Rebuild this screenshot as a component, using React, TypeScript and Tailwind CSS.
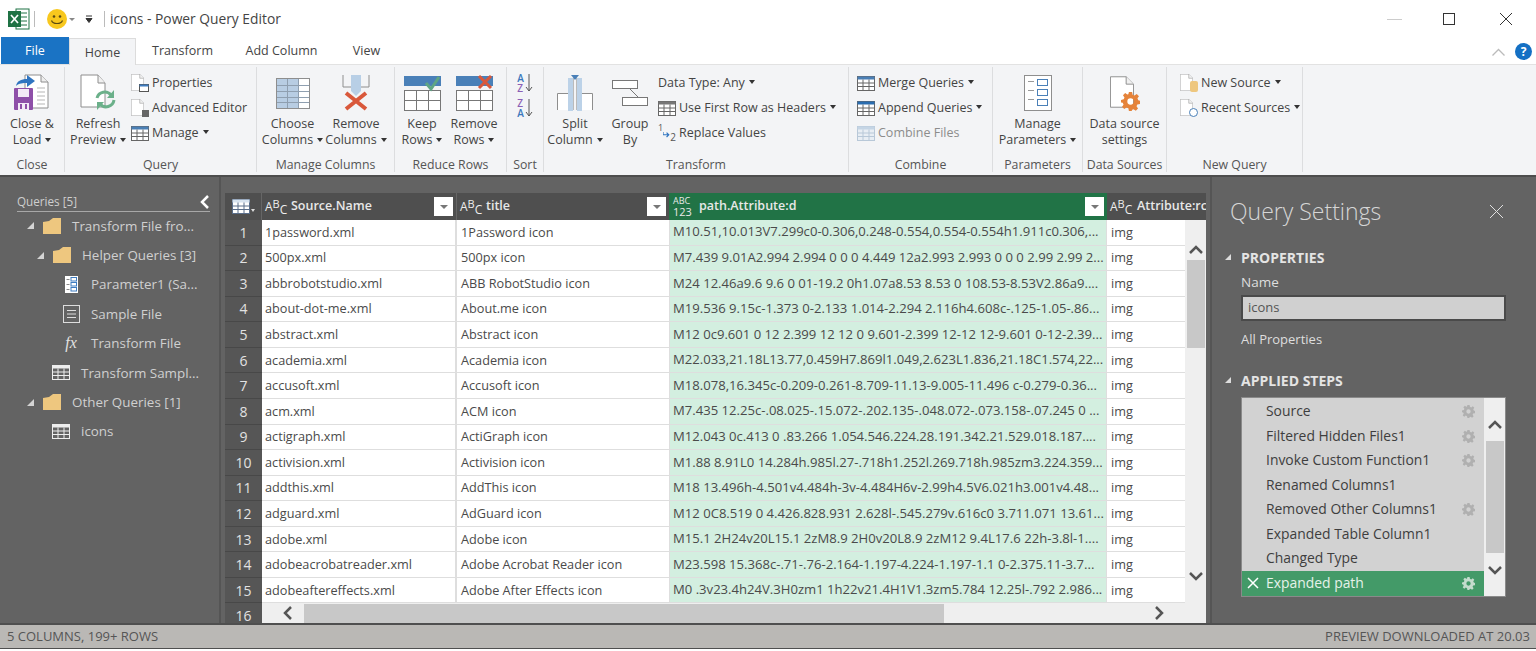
import type { ReactNode } from "react";

const rows = [
  ["1password.xml", "1Password icon", "M10.51,10.013V7.299c0-0.306,0.248-0.554,0.554-0.554h1.911c0.306,..."],
  ["500px.xml", "500px icon", "M7.439 9.01A2.994 2.994 0 0 0 4.449 12a2.993 2.993 0 0 0 2.99 2.99 2..."],
  ["abbrobotstudio.xml", "ABB RobotStudio icon", "M24 12.46a9.6 9.6 0 01-19.2 0h1.07a8.53 8.53 0 108.53-8.53V2.86a9...."],
  ["about-dot-me.xml", "About.me icon", "M19.536 9.15c-1.373 0-2.133 1.014-2.294 2.116h4.608c-.125-1.05-.86..."],
  ["abstract.xml", "Abstract icon", "M12 0c9.601 0 12 2.399 12 12 0 9.601-2.399 12-12 12-9.601 0-12-2.39..."],
  ["academia.xml", "Academia icon", "M22.033,21.18L13.77,0.459H7.869l1.049,2.623L1.836,21.18C1.574,22..."],
  ["accusoft.xml", "Accusoft icon", "M18.078,16.345c-0.209-0.261-8.709-11.13-9.005-11.496 c-0.279-0.36..."],
  ["acm.xml", "ACM icon", "M7.435 12.25c-.08.025-.15.072-.202.135-.048.072-.073.158-.07.245 0 ..."],
  ["actigraph.xml", "ActiGraph icon", "M12.043 0c.413 0 .83.266 1.054.546.224.28.191.342.21.529.018.187...."],
  ["activision.xml", "Activision icon", "M1.88 8.91L0 14.284h.985l.27-.718h1.252l.269.718h.985zm3.224.359..."],
  ["addthis.xml", "AddThis icon", "M18 13.496h-4.501v4.484h-3v-4.484H6v-2.99h4.5V6.021h3.001v4.48..."],
  ["adguard.xml", "AdGuard icon", "M12 0C8.519 0 4.426.828.931 2.628l-.545.279v.616c0 3.711.071 13.61..."],
  ["adobe.xml", "Adobe icon", "M15.1 2H24v20L15.1 2zM8.9 2H0v20L8.9 2zM12 9.4L17.6 22h-3.8l-1...."],
  ["adobeacrobatreader.xml", "Adobe Acrobat Reader icon", "M23.598 15.368c-.71-.76-2.164-1.197-4.224-1.197-1.1 0-2.375.11-3.7..."],
  ["adobeaftereffects.xml", "Adobe After Effects icon", "M0 .3v23.4h24V.3H0zm1 1h22v21.4H1V1.3zm5.784 12.25l-.792 2.986..."],
];

const steps = [
  ["Source", true],
  ["Filtered Hidden Files1", true],
  ["Invoke Custom Function1", true],
  ["Renamed Columns1", false],
  ["Removed Other Columns1", true],
  ["Expanded Table Column1", false],
  ["Changed Type", false],
] as const;

function Caret() {
  return <span className="inline-block ml-1 align-middle border-x-[3.5px] border-t-[4px] border-x-transparent border-t-[#333] -translate-y-px" />;
}

function Doc({ w = 26, h = 34 }: { w?: number; h?: number }) {
  return (
    <svg width={w} height={h} viewBox="0 0 26 34">
      <path d="M.5.5h17l8 8v25H.5z" fill="#fff" stroke="#8a8a8a" />
      <path d="M17.5.5v8h8" fill="#f0f0f0" stroke="#8a8a8a" />
    </svg>
  );
}

function Gear({ size = 12, color = "#a9a9a9" }: { size?: number; color?: string }) {
  return (
    <svg width={size} height={size} viewBox="0 0 24 24">
      <path
        fill={color}
        fillRule="evenodd"
        d="M10 0h4l.7 3.4 2.3 1 2.9-1.9 2.8 2.8L20.8 8l1 2.3 2.2.7v4l-3.4.7-1 2.3 1.9 2.9-2.8 2.8-2.9-1.9-2.3 1L14 24h-4l-.7-3.4-2.3-1-2.9 1.9-2.8-2.8L3.2 16l-1-2.3L0 13.200V10l3.400-.7 1-2.300L2.500 4.100 5.300 1.300 8 3.200l1.300-.5zM12 8a4 4 0 100 8 4 4 0 000-8z"
      />
    </svg>
  );
}

function GridIcon({ color = "#666", fill = "#fff", head = "#4a7fb5" }: { color?: string; fill?: string; head?: string }) {
  return (
    <svg width="18" height="15" viewBox="0 0 18 15">
      <rect x=".5" y=".5" width="17" height="14" fill={fill} stroke={color} />
      <rect x=".5" y=".5" width="17" height="3" fill={head} />
      <path d="M6 3.500v11M12 3.500v11M.5 7h17M.5 10.500h17" stroke={color} fill="none" />
    </svg>
  );
}

function CloseLoadIcon() {
  return (
    <svg width="36" height="38" viewBox="0 0 36 38">
      <path d="M11 1h16l7 7v26H11z" fill="#fff" stroke="#8e8e8e" />
      <path d="M27 1v7h7" fill="#eee" stroke="#8e8e8e" />
      <path d="M23 14h8M23 18h8M23 22h8M23 26h8M23 30h8" stroke="#b5b5b5" />
      <path d="M2 12c1-5 5-7 11-7V1l8 6-8 6V9c-4 0-8 0-11 3z" fill="#2f74c0" />
      <rect x="0" y="14" width="19" height="22" rx="1" fill="#8e4fa8" />
      <rect x="4" y="15" width="11" height="8" fill="#f3eaf6" />
      <rect x="4" y="29" width="11" height="7" fill="#f3eaf6" />
      <rect x="6" y="30" width="2" height="5" fill="#8e4fa8" />
      <rect x="11" y="30" width="2" height="5" fill="#8e4fa8" />
    </svg>
  );
}

function RefreshIcon() {
  return (
    <svg width="36" height="38" viewBox="0 0 36 38">
      <path d="M1 1h17l7 8v24H1z" fill="#fff" stroke="#8e8e8e" />
      <path d="M18 1v8h7" fill="#f0f0f0" stroke="#8e8e8e" />
      <path d="M17 24a8 8 0 0 1 14-3" fill="none" stroke="#6bb08a" strokeWidth="3" />
      <path d="M34 26a8 8 0 0 1-14 4" fill="none" stroke="#6bb08a" strokeWidth="3" />
      <path d="M34 16v8h-7zM17 36v-8h7z" fill="#6bb08a" />
    </svg>
  );
}

function ChooseIcon() {
  return (
    <svg width="34" height="31" viewBox="0 0 34 31">
      <rect x=".5" y=".5" width="33" height="30" fill="#fff" stroke="#8e8e8e" />
      <rect x="1" y="1" width="22" height="29" fill="#b8cde3" />
      <path d="M11.500 1v29M22.500 1v29M1 7.500h32M1 13.500h32M1 19.500h32M1 24.500h32" stroke="#8f9fb0" fill="none" />
    </svg>
  );
}

function RemoveColIcon() {
  return (
    <svg width="28" height="36" viewBox="0 0 28 36">
      <path d="M1 0v12h8M27 0v12h-8" fill="none" stroke="#8e8e8e" />
      <path d="M9 0h10v16l-5 5-5-5z" fill="#b8cfe6" />
      <path d="M4 18l20 16M24 18L4 34" stroke="#d9583b" strokeWidth="4" />
    </svg>
  );
}

function RowsIcon({ keep }: { keep: boolean }) {
  return (
    <svg width="37" height="36" viewBox="0 0 37 36">
      <rect x="0" y="1" width="37" height="10" fill="#4a80b8" />
      <rect x=".5" y="15.500" width="36" height="20" fill="#fff" stroke="#777" />
      <path d="M12.500 15.500v20M24.500 15.500v20M.5 25.500h36" stroke="#777" fill="none" />
      {keep ? (
        <path d="M22 8l5 6 8-12" fill="none" stroke="#5fa585" strokeWidth="3" />
      ) : (
        <path d="M23 1l12 12M35 1L23 13" fill="none" stroke="#d9583b" strokeWidth="3" />
      )}
    </svg>
  );
}

function SortIcon({ flip }: { flip?: boolean }) {
  const first = flip ? "Z" : "A";
  const second = flip ? "A" : "Z";
  return (
    <div className="flex items-center h-[25px] gap-[1px]">
      <div className="flex flex-col text-[10px] leading-[10px] font-semibold">
        <span className={flip ? "text-[#8b5fb5]" : "text-[#3a78bd]"}>{first}</span>
        <span className={flip ? "text-[#3a78bd]" : "text-[#8b5fb5]"}>{second}</span>
      </div>
      <svg width="8" height="18" viewBox="0 0 8 18">
        <path d="M4 0v17M1 13l3 4 3-4" fill="none" stroke="#555" />
      </svg>
    </div>
  );
}

function SplitIcon() {
  return (
    <svg width="36" height="36" viewBox="0 0 36 36">
      <path d="M.5 35V18.500h11V35M24.500 35V18.500h11V35" fill="#fff" stroke="#8e8e8e" />
      <rect x="11" y="3" width="5" height="33" fill="#bcd2e8" />
      <rect x="20" y="3" width="5" height="33" fill="#bcd2e8" />
      <path d="M16.500 3v32M19.500 3v32" stroke="#bbb" fill="none" />
      <path d="M14 0h8l-4 5z" fill="#4a80b8" />
    </svg>
  );
}

function GroupIcon() {
  return (
    <svg width="36" height="26" viewBox="0 0 36 26">
      <rect x=".5" y=".5" width="25" height="8" fill="#fff" stroke="#777" />
      <rect x="10.500" y="17.500" width="25" height="8" fill="#fff" stroke="#777" />
      <path d="M18 9l8 8" stroke="#777" />
    </svg>
  );
}

function ParamsIcon() {
  return (
    <svg width="28" height="36" viewBox="0 0 28 36">
      <rect x=".5" y=".5" width="27" height="35" fill="#fff" stroke="#8e8e8e" />
      <path d="M4 6.500h6M4 15.500h6M4 24.500h6" stroke="#999" />
      <rect x="13.500" y="4.500" width="10" height="6" fill="#fff" stroke="#4a80b8" />
      <rect x="13.500" y="14.500" width="10" height="6" fill="#fff" stroke="#4a80b8" />
      <rect x="13.500" y="24.500" width="10" height="6" fill="#fff" stroke="#4a80b8" />
    </svg>
  );
}

function DataSourceIcon() {
  return (
    <div className="relative w-[30px] h-[36px]">
      <Doc w={24} h={34} />
      <div className="absolute right-0 bottom-0">
        <Gear size={19} color="#e5833a" />
      </div>
    </div>
  );
}

function SmallDoc({ badge }: { badge: ReactNode }) {
  return (
    <div className="relative w-[18px] h-[18px]">
      <Doc w={13} h={17} />
      <div className="absolute right-0 bottom-0">{badge}</div>
    </div>
  );
}

function ReplaceIcon() {
  return (
    <div className="flex w-[18px] h-[20px] text-[#555] leading-[10px]">
      <span className="text-[9px]">1</span>
      <svg width="8" height="20" viewBox="0 0 8 20">
        <path d="M0 9v3h6M4 9.500L6.500 12 4 14.500" fill="none" stroke="#2f74c0" strokeWidth="1.300" />
      </svg>
      <span className="text-[10px] mt-[9px]">2</span>
    </div>
  );
}

function Group({ label, width, children }: { label: string; width: string; children: ReactNode }) {
  return (
    <div className={`${width} shrink-0 mt-[2px] mb-[3px] flex flex-col border-r border-[#dcdddf]`}>
      <div className="flex flex-1 pt-[3.500px] min-h-0">{children}</div>
      <div className="h-[15px] leading-[16px] text-center text-[#555] text-[12.300px] whitespace-nowrap">{label}</div>
    </div>
  );
}

function BigButton({ icon, lines, width, caret }: { icon: ReactNode; lines: string[]; width: string; caret?: boolean }) {
  return (
    <div className={`${width} shrink-0 flex flex-col items-center text-[#444]`}>
      <div className="h-[45.500px] flex items-center justify-center">{icon}</div>
      {lines.map((line, i) => (
        <div key={line} className="h-[16px] leading-[16px] whitespace-nowrap">
          {line}
          {caret && i === lines.length - 1 && <Caret />}
        </div>
      ))}
    </div>
  );
}

function SmallButton({ icon, children, muted }: { icon: ReactNode; children: ReactNode; muted?: boolean }) {
  return (
    <div className={`h-[25px] flex items-center gap-[3px] whitespace-nowrap ${muted ? "text-[#8c8c8c]" : "text-[#444]"}`}>
      <div className="w-[18px] flex justify-center shrink-0">{icon}</div>
      {children}
    </div>
  );
}

function FilterButton() {
  return (
    <div className="w-[19px] h-[19px] bg-white flex items-center justify-center shrink-0">
      <span className="border-x-[4px] border-t-[4px] border-x-transparent border-t-[#777]" />
    </div>
  );
}

function AbcIcon() {
  return (
    <span className="w-[22px] shrink-0 text-[12px] leading-none font-normal flex items-center text-[#eee]">
      A<span className="-translate-y-[3px] text-[11px]">B</span>
      <span className="translate-y-[3px]">C</span>
    </span>
  );
}

function Chevron({ dir, className }: { dir: "up" | "down" | "left" | "right"; className?: string }) {
  const d = {
    up: "M2 11l6-6 6 6",
    down: "M2 5l6 6 6-6",
    left: "M11 2L5 8l6 6",
    right: "M5 2l6 6-6 6",
  }[dir];
  return (
    <svg width="16" height="16" viewBox="0 0 16 16" className={className}>
      <path d={d} fill="none" stroke="#555" strokeWidth="2.500" />
    </svg>
  );
}

function Tree({ pad, arrow, icon, label }: { pad: string; arrow?: boolean; icon: ReactNode; label: string }) {
  return (
    <div className={`${pad} h-[29.400px] flex items-center text-[#d0d0d0] whitespace-nowrap text-[13.400px]`}>
      {arrow && <span className="mr-[9px] border-l-[7px] border-b-[7px] border-l-transparent border-b-[#d4d4d4]" />}
      <div className="w-[18px] h-[18px] flex items-center justify-center shrink-0">{icon}</div>
      <span className="ml-[11px]">{label}</span>
    </div>
  );
}

function Folder() {
  return (
    <svg width="18" height="16" viewBox="0 0 18 16">
      <path d="M0 4l6-1 4-3h8v16H0z" fill="#eec77f" />
    </svg>
  );
}

function ParamTreeIcon() {
  return (
    <svg width="13" height="17" viewBox="0 0 13 17">
      <rect x="0" y="0" width="13" height="17" fill="#fff" />
      <path d="M1.500 3.500h3M1.500 8.500h3M1.500 13.500h3" stroke="#888" />
      <rect x="6" y="1.500" width="5.500" height="3.500" fill="#fff" stroke="#3f7cc0" />
      <rect x="6" y="6.500" width="5.500" height="3.500" fill="#fff" stroke="#3f7cc0" />
      <rect x="6" y="11.500" width="5.500" height="3.500" fill="#fff" stroke="#3f7cc0" />
    </svg>
  );
}

function TitleBar() {
  return (
    <div className="h-[38px] bg-white flex items-center shrink-0 text-[#444]">
      <svg width="22" height="22" viewBox="0 0 22 22" className="ml-[8px]">
        <rect x="8" y="1" width="13" height="20" fill="#fff" stroke="#1f7244" />
        <path d="M12 5h7M12 9h7M12 13h7M12 17h7" stroke="#1f7244" />
        <rect x="0" y="3" width="13" height="16" fill="#1f7244" />
        <path d="M3 7l7 8M10 7l-7 8" stroke="#fff" strokeWidth="1.700" />
      </svg>
      <div className="w-px h-[16px] bg-[#bbb] ml-[4px]" />
      <svg width="20" height="20" viewBox="0 0 20 20" className="ml-[12px]">
        <circle cx="10" cy="10" r="10" fill="#f8c81e" />
        <circle cx="7" cy="7.500" r="1.300" fill="#5a4a12" />
        <circle cx="13" cy="7.500" r="1.300" fill="#5a4a12" />
        <path d="M4.500 11.500c1.500 4 9.500 4 11 0" fill="none" stroke="#5a4a12" strokeWidth="1.200" />
      </svg>
      <span className="ml-[2px] border-x-[3px] border-t-[3px] border-x-transparent border-t-[#888]" />
      <svg width="8" height="8" viewBox="0 0 8 8" className="ml-[10px]">
        <path d="M1 1h6M1 3.500h6l-3 4z" stroke="#333" fill="#333" />
      </svg>
      <div className="w-px h-[16px] bg-[#bbb] ml-[11px]" />
      <div className="ml-[5px] text-[13.800px]">icons - Power Query Editor</div>
      <div className="ml-auto flex items-center">
        <div className="w-[15px] h-px bg-[#ccc]" />
        <div className="ml-[41px] w-[12px] h-[12px] border border-[#333]" />
        <svg width="12" height="12" viewBox="0 0 12 12" className="ml-[45px] mr-[24px]">
          <path d="M0 0l12 12M12 0L0 12" stroke="#333" />
        </svg>
      </div>
    </div>
  );
}

function Tabs() {
  return (
    <div className="h-[27px] bg-white flex items-end shrink-0 border-b border-[#e2e2e2] text-[#444]">
      <div className="w-[68px] h-[27px] ml-px pt-[2px] bg-[#1a73c4] text-white flex items-center justify-center">File</div>
      <div className="w-[67px] h-[27px] pt-[2px] bg-[#f3f4f6] border-x border-t border-[#dcdcdc] flex items-center justify-center -mb-px">Home</div>
      <div className="w-[93px] h-[27px] pt-[2px] flex items-center justify-center">Transform</div>
      <div className="w-[105px] h-[27px] pt-[2px] flex items-center justify-center">Add Column</div>
      <div className="w-[65px] h-[27px] pt-[2px] flex items-center justify-center">View</div>
      <div className="ml-auto h-[27px] pt-[2px] flex items-center mr-[4px]">
        <svg width="13" height="8" viewBox="0 0 13 8">
          <path d="M.5 7.500l6-6 6 6" fill="none" stroke="#bbb" strokeWidth="1.300" />
        </svg>
        <div className="ml-[10px] w-[17px] h-[17px] rounded-full bg-[#1470c4] text-white text-[12px] font-bold flex items-center justify-center">?</div>
      </div>
    </div>
  );
}

function Ribbon() {
  return (
    <div className="h-[110px] bg-[#f3f4f6] flex shrink-0">
      <Group label="Close" width="w-[65px]">
        <BigButton width="w-[64px]" icon={<CloseLoadIcon />} lines={["Close &", "Load"]} caret />
      </Group>
      <Group label="Query" width="w-[192px]">
        <BigButton width="w-[66px]" icon={<RefreshIcon />} lines={["Refresh", "Preview"]} caret />
        <div className="flex flex-col">
          <SmallButton icon={<SmallDoc badge={<svg width="10" height="8" viewBox="0 0 10 8"><rect x=".5" y=".5" width="9" height="7" fill="#fff" stroke="#555" /><rect x=".5" y=".5" width="9" height="2" fill="#3f7cc0" /></svg>} />}>Properties</SmallButton>
          <SmallButton icon={<SmallDoc badge={<div className="w-[7px] h-[7px] bg-[#666]" />} />}>Advanced Editor</SmallButton>
          <SmallButton icon={<GridIcon />}>
            <span>
              Manage
              <Caret />
            </span>
          </SmallButton>
        </div>
      </Group>
      <Group label="Manage Columns" width="w-[138px]">
        <BigButton width="w-[71px]" icon={<ChooseIcon />} lines={["Choose", "Columns"]} caret />
        <BigButton width="w-[56px]" icon={<RemoveColIcon />} lines={["Remove", "Columns"]} caret />
      </Group>
      <Group label="Reduce Rows" width="w-[112px]">
        <BigButton width="w-[54px]" icon={<RowsIcon keep />} lines={["Keep", "Rows"]} caret />
        <BigButton width="w-[50px]" icon={<RowsIcon keep={false} />} lines={["Remove", "Rows"]} caret />
      </Group>
      <Group label="Sort" width="w-[37px]">
        <div className="w-full flex flex-col items-center">
          <SortIcon />
          <SortIcon flip />
        </div>
      </Group>
      <Group label="Transform" width="w-[305px]">
        <BigButton width="w-[62px]" icon={<SplitIcon />} lines={["Split", "Column"]} caret />
        <BigButton width="w-[48px]" icon={<GroupIcon />} lines={["Group", "By"]} />
        <div className="flex flex-col ml-[4px]">
          <div className="h-[25px] flex items-center text-[#444]">
            Data Type: Any
            <Caret />
          </div>
          <SmallButton icon={<GridIcon head="#777" />}>
            <span>
              Use First Row as Headers
              <Caret />
            </span>
          </SmallButton>
          <SmallButton icon={<ReplaceIcon />}>Replace Values</SmallButton>
        </div>
      </Group>
      <Group label="Combine" width="w-[144px]">
        <div className="flex flex-col ml-[8px]">
          <SmallButton icon={<GridIcon />}>
            <span>
              Merge Queries
              <Caret />
            </span>
          </SmallButton>
          <SmallButton icon={<GridIcon head="#2a6db0" />}>
            <span>
              Append Queries
              <Caret />
            </span>
          </SmallButton>
          <SmallButton muted icon={<GridIcon color="#b8c8d8" fill="#e8eef4" head="#c5d5e5" />}>
            Combine Files
          </SmallButton>
        </div>
      </Group>
      <Group label="Parameters" width="w-[90px]">
        <BigButton width="w-[89px]" icon={<ParamsIcon />} lines={["Manage", "Parameters"]} caret />
      </Group>
      <Group label="Data Sources" width="w-[84px]">
        <BigButton width="w-[83px]" icon={<DataSourceIcon />} lines={["Data source", "settings"]} />
      </Group>
      <Group label="New Query" width="w-[136px]">
        <div className="flex flex-col ml-[13px]">
          <SmallButton icon={<SmallDoc badge={<div className="w-[8px] h-[11px] rounded-[2px] bg-[#eec77f]" />} />}>
            <span>
              New Source
              <Caret />
            </span>
          </SmallButton>
          <SmallButton icon={<SmallDoc badge={<div className="w-[9px] h-[9px] rounded-full bg-white border border-[#4a80b8]" />} />}>
            <span>
              Recent Sources
              <Caret />
            </span>
          </SmallButton>
        </div>
      </Group>
    </div>
  );
}

function QueriesPane() {
  return (
    <div className="w-[221px] shrink-0 border-r-[2px] border-[#555] pl-[17px] pr-[9px] pt-[16px]">
      <div className="flex items-center justify-between border-b border-[#a8a8a8] h-[19px] text-[#cfcfcf] text-[11.700px]">
        <span>Queries [5]</span>
        <svg width="10" height="14" viewBox="0 0 10 14">
          <path d="M8 1L2 7l6 6" fill="none" stroke="#fff" strokeWidth="2.500" />
        </svg>
      </div>
      <div className="-ml-[17px] -mt-px">
        <Tree pad="pl-[27px]" arrow icon={<Folder />} label="Transform File fro..." />
        <Tree pad="pl-[37px]" arrow icon={<Folder />} label="Helper Queries [3]" />
        <Tree pad="pl-[62px]" icon={<ParamTreeIcon />} label="Parameter1 (Sa..." />
        <Tree
          pad="pl-[62px]"
          icon={
            <svg width="17" height="18" viewBox="0 0 17 18">
              <rect x=".5" y=".5" width="16" height="17" fill="none" stroke="#ddd" />
              <path d="M4 5.500h9M4 9h9M4 12.500h9" stroke="#ddd" />
            </svg>
          }
          label="Sample File"
        />
        <Tree pad="pl-[62px]" icon={<span className="text-[#e2e2e2] italic text-[16px] font-['Liberation_Serif',serif]">fx</span>} label="Transform File" />
        <Tree pad="pl-[52px]" icon={<GridIcon color="#eee" fill="#636363" head="#eee" />} label="Transform Sampl..." />
        <Tree pad="pl-[27px]" arrow icon={<Folder />} label="Other Queries [1]" />
        <Tree pad="pl-[52px]" icon={<GridIcon color="#eee" fill="#636363" head="#eee" />} label="icons" />
      </div>
    </div>
  );
}

function DataTable() {
  return (
    <div className="w-[981px] shrink-0 ml-[4px] mt-[16px] flex flex-col">
      <div className="h-[27px] flex items-center bg-[#4f4f4f] shrink-0 text-[#e8e8e8] font-semibold">
        <div className="w-[37px] flex items-center justify-center gap-[1px] border-r border-[#666] h-full">
          <GridIcon color="#5a6e8a" fill="#fff" head="#d8e4f0" />
          <span className="mt-[8px] border-x-[2.500px] border-t-[3px] border-x-transparent border-t-[#ddd]" />
        </div>
        <div className="w-[195px] h-full flex items-center pl-[3px] pr-[3px] border-r border-[#666]">
          <AbcIcon />
          <span className="ml-[4px] flex-1">Source.Name</span>
          <FilterButton />
        </div>
        <div className="w-[212px] h-full flex items-center pl-[3px] pr-[3px]">
          <AbcIcon />
          <span className="ml-[4px] flex-1">title</span>
          <FilterButton />
        </div>
        <div className="w-[438px] h-full flex items-center pl-[4px] pr-[3px] bg-[#217346]">
          <span className="w-[22px] flex flex-col font-normal">
            <span className="text-[9px] leading-[10px]">ABC</span>
            <span className="text-[11px] leading-[11px]">123</span>
          </span>
          <span className="ml-[4px] flex-1">path.Attribute:d</span>
          <FilterButton />
        </div>
        <div className="flex-1 h-full flex items-center pl-[3px] overflow-hidden whitespace-nowrap">
          <AbcIcon />
          <span className="ml-[5px]">Attribute:rc</span>
        </div>
      </div>
      <div className="flex h-[403px] overflow-hidden">
        <div className="w-[37px] shrink-0 bg-[#565656] text-[#e2e2e2] text-[14px]">
          {Array.from({ length: 16 }, (_, i) => (
            <div key={i} className="h-[25.570px] flex items-center justify-center border-b border-[#484848]">
              {i + 1}
            </div>
          ))}
        </div>
        <div className="flex-1 flex flex-col min-w-0 bg-[#efefef]">
          <div className="flex flex-1 min-h-0">
            <div className="flex-1 min-w-0 bg-[#efefef]">
              {rows.map((row) => (
                <div key={row[0]} className="h-[25.570px] flex border-b-[1.500px] border-[#dedede] text-[#4a4a4a] whitespace-nowrap text-[12.700px]">
                  <div className="w-[195px] shrink-0 bg-white pl-[3px] flex items-center border-r-2 border-[#dedede]">{row[0]}</div>
                  <div className="w-[212px] shrink-0 bg-white pl-[4px] flex items-center">{row[1]}</div>
                  <div className="w-[438px] shrink-0 bg-[#d3efe0] pl-[3px] flex items-center border-x border-[#dedede] overflow-hidden text-[13.100px]">{row[2]}</div>
                  <div className="flex-1 bg-white pl-[4px] flex items-center">img</div>
                </div>
              ))}
            </div>
            <div className="w-[21px] shrink-0 flex flex-col items-center pt-[22px] bg-[#efefef]">
              <Chevron dir="up" />
              <div className="w-[18px] h-[88px] mt-[2px] bg-[#c8c8c8]" />
              <Chevron dir="down" className="mt-auto mb-[20px]" />
            </div>
          </div>
          <div className="h-[19.500px] shrink-0 flex items-center bg-[#efefef]">
            <Chevron dir="left" className="ml-[18px]" />
            <div className="ml-[8px] w-[640px] h-full bg-[#c8c8c8]" />
            <Chevron dir="right" className="ml-[207px]" />
          </div>
        </div>
      </div>
    </div>
  );
}

function SettingsPane() {
  return (
    <div className="ml-[4px] flex-1 border-l-[2px] border-[#555] flex flex-col text-[#dedede] pl-[13px] text-[13px]">
      <div className="flex items-center h-[32px] mt-[18px] pr-[32px] pl-[5px]">
        <span className="text-[23px] font-light text-[#d6d6d6]">Query Settings</span>
        <svg width="15" height="15" viewBox="0 0 15 15" className="ml-auto">
          <path d="M1 1l13 13M14 1L1 14" stroke="#e0e0e0" />
        </svg>
      </div>
      <div className="flex items-center h-[20px] mt-[20px] font-bold text-[#e4e4e4] text-[14px]">
        <span className="border-l-[6px] border-b-[6px] border-l-transparent border-b-[#ddd] mr-[10px]" />
        PROPERTIES
      </div>
      <div className="pl-[16px] mt-[5px] h-[20px] leading-[20px] text-[13.500px]">Name</div>
      <div className="ml-[16px] mt-[3px] w-[265px] h-[26px] bg-[#d0d0d0] border-2 border-[#4a4a4a] text-[#555] flex items-center pl-[5px]">icons</div>
      <div className="pl-[16px] mt-[8px] h-[20px] leading-[20px]">All Properties</div>
      <div className="flex items-center h-[20px] mt-[21px] font-bold text-[#e4e4e4] text-[14px]">
        <span className="border-l-[6px] border-b-[6px] border-l-transparent border-b-[#ddd] mr-[10px]" />
        APPLIED STEPS
      </div>
      <div className="ml-[16px] mt-[7px] w-[265px] h-[200px] border border-[#8a8a8a] bg-[#efefef] flex text-[#3e3e3e] text-[13.900px]">
        <div className="w-[242px] shrink-0 bg-[#d2d2d2] h-full pt-[1.500px]">
          {steps.map(([label, gear]) => (
            <div key={label} className="h-[24.500px] flex items-center pl-[24px] pr-[9px] whitespace-nowrap">
              {label}
              {gear && (
                <span className="ml-auto">
                  <Gear size={13} color="#b0b0b0" />
                </span>
              )}
            </div>
          ))}
          <div className="h-[24.500px] flex items-center bg-[#439a68] text-[#e6f2ea] pr-[9px] pl-[5px]">
            <svg width="12" height="12" viewBox="0 0 12 12" className="mr-[7px]">
              <path d="M1 1l10 10M11 1L1 11" stroke="#fff" strokeWidth="1.500" />
            </svg>
            Expanded path
            <span className="ml-auto">
              <Gear size={13} color="#c4dccd" />
            </span>
          </div>
        </div>
        <div className="flex-1 flex flex-col items-center pt-[19px]">
          <Chevron dir="up" />
          <div className="w-[18px] h-[112px] mt-[8px] bg-[#c8c8c8]" />
          <Chevron dir="down" className="mt-[9px]" />
        </div>
      </div>
    </div>
  );
}

export default function App() {
  return (
    <div className="w-[1536px] h-[651px] overflow-hidden flex flex-col bg-white font-['Open_Sans',sans-serif] text-[12.500px]">
      <TitleBar />
      <Tabs />
      <Ribbon />
      <div className="flex-1 min-h-0 flex bg-[#636363] border-t-2 border-[#4d4d4d]">
        <QueriesPane />
        <DataTable />
        <SettingsPane />
      </div>
      <div className="h-[26px] mb-[2px] shrink-0 bg-[#bab8b5] border-t-2 border-b border-[#4f4f4f] flex items-center justify-between pl-[7px] pr-[6px] text-[#555] text-[13px]">
        <span>5 COLUMNS, 199+ ROWS</span>
        <span>PREVIEW DOWNLOADED AT 20.03</span>
      </div>
    </div>
  );
}
